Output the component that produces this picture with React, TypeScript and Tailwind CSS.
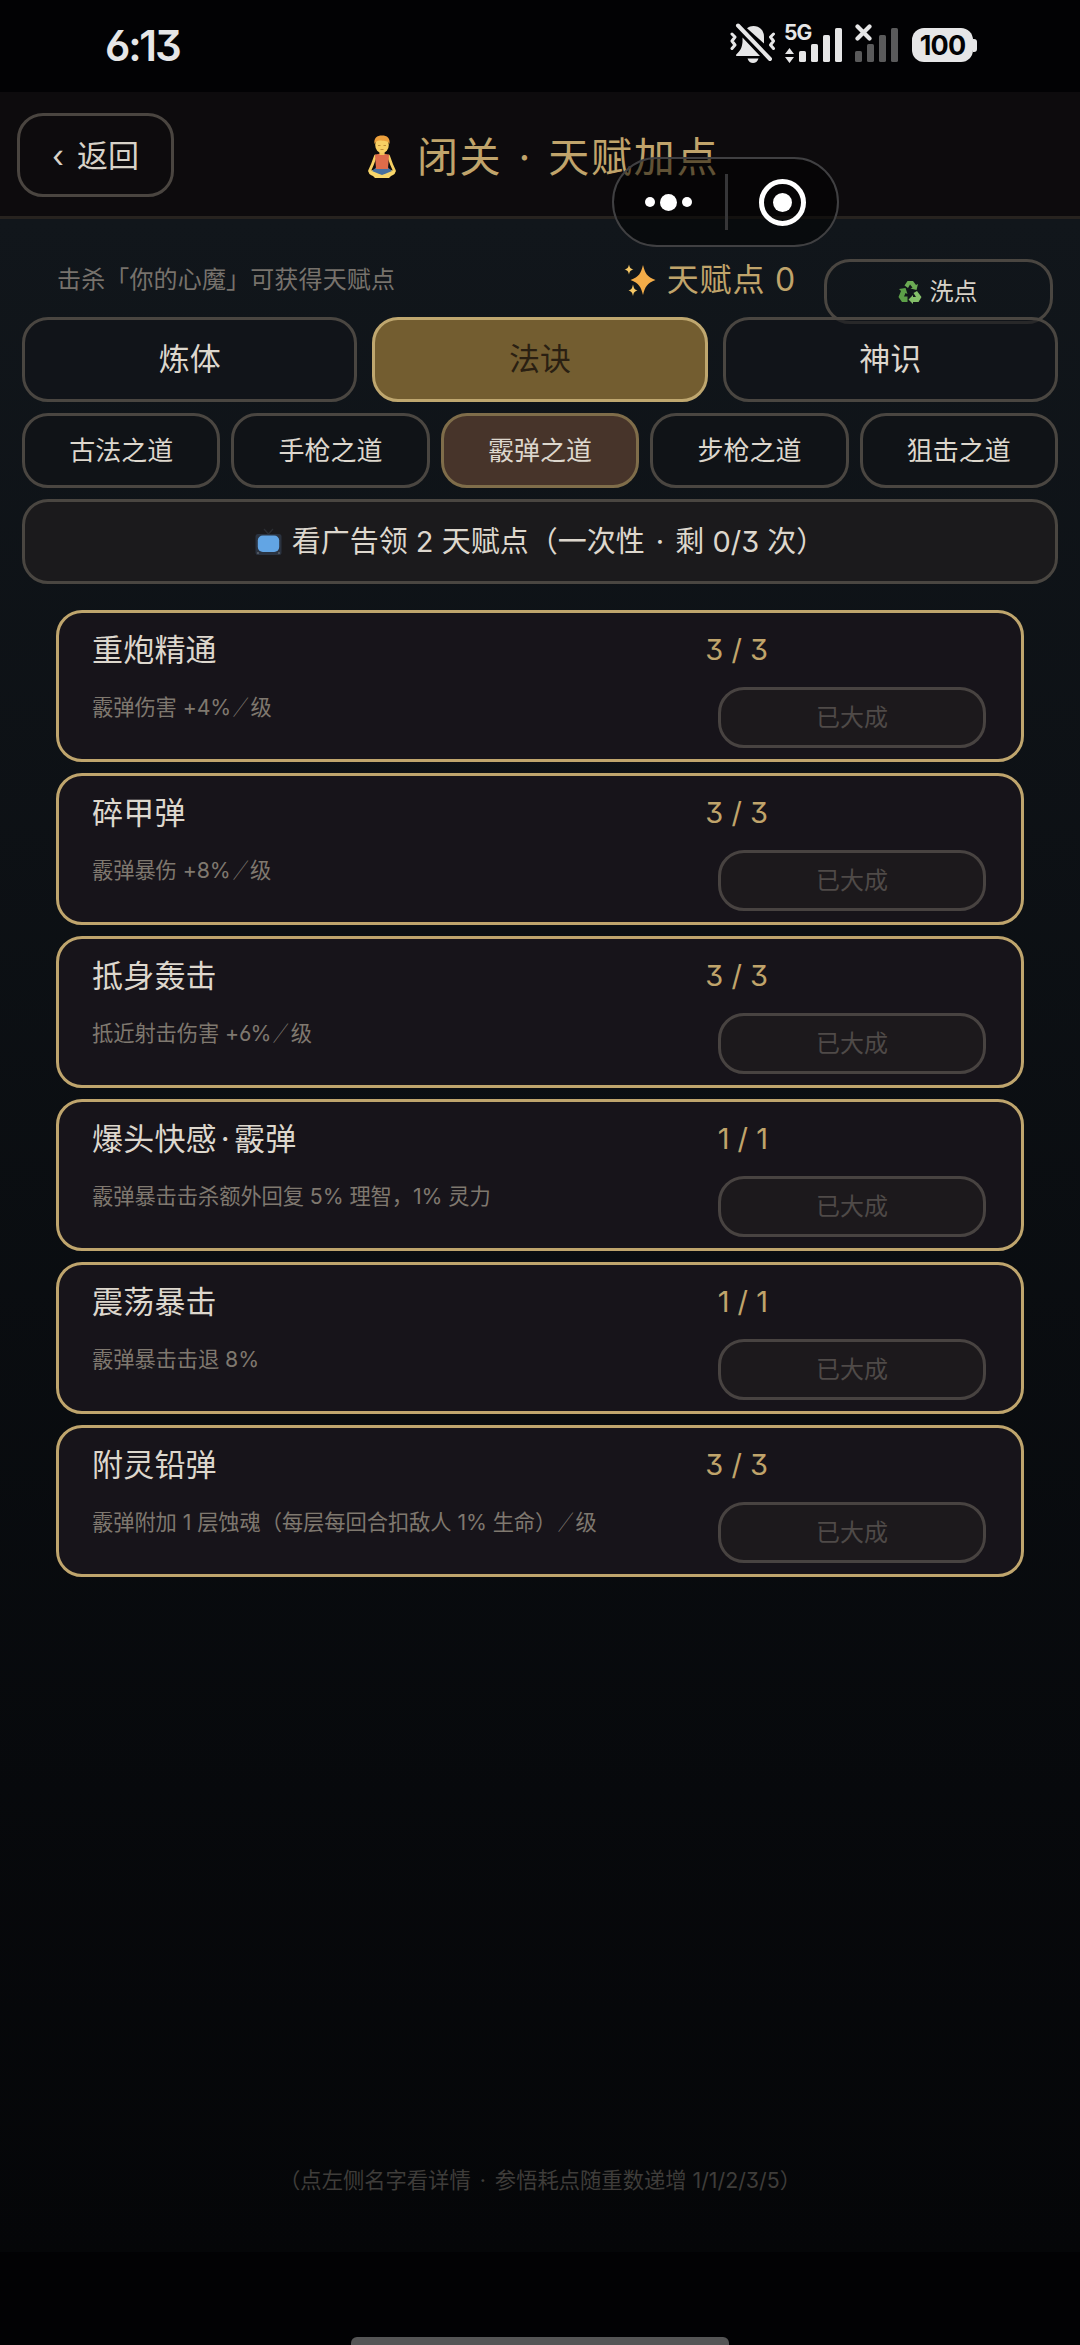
import { useState } from 'react';
import clsx from 'clsx';

interface Talent {
  name: string;
  desc: string;
  perLevel?: boolean;
  level: string;
}

const tabs = ['炼体', '法诀', '神识'];
const paths = ['古法之道', '手枪之道', '霰弹之道', '步枪之道', '狙击之道'];

const talents: Talent[] = [
  { name: '重炮精通', desc: '霰弹伤害 +4%', perLevel: true, level: '3 / 3' },
  { name: '碎甲弹', desc: '霰弹暴伤 +8%', perLevel: true, level: '3 / 3' },
  { name: '抵身轰击', desc: '抵近射击伤害 +6%', perLevel: true, level: '3 / 3' },
  { name: '爆头快感·霰弹', desc: '霰弹暴击击杀额外回复 5% 理智，1% 灵力', level: '1 / 1' },
  { name: '震荡暴击', desc: '霰弹暴击击退 8%', level: '1 / 1' },
  { name: '附灵铅弹', desc: '霰弹附加 1 层蚀魂（每层每回合扣敌人 1% 生命）', perLevel: true, level: '3 / 3' },
];

const barHeights = [
  { x: 0, y: 23, h: 11 },
  { x: 12, y: 16, h: 18 },
  { x: 24, y: 7, h: 27 },
  { x: 36, y: 0, h: 34 },
];

const SignalBars = ({ color }: { color: string }) => (
  <svg className="h-[34px] w-[43px]" viewBox="0 0 43 34" fill={color}>
    {barHeights.map((bar) => (
      <rect key={bar.x} x={bar.x} y={bar.y} width="7" height={bar.h} rx="1.6" />
    ))}
  </svg>
);

const MutedBell = () => (
  <svg className="h-[41px] w-[46px]" viewBox="0 0 46 41" fill="#e6e6e7">
    <path d="M17 5.2C19 3.8 21 3 23.500 3C29.500 3 34 7.500 34 13.500V20.500Z" />
    <path d="M12.500 14.500L30 33H7C6 33 5.700 32 6.500 31.200C10 28 12 25 12.500 19Z" />
    <path d="M17.500 35.500H28.500C27.500 38.500 25.500 40 23 40C20.500 40 18.500 38.500 17.500 35.500Z" />
    <path d="M8 2.500L40 36" stroke="#020204" strokeWidth="7" />
    <path d="M8 2.500L40 36" stroke="#e6e6e7" strokeWidth="4" strokeLinecap="round" />
    <path
      d="M2 11L5 14L2 18L5 22L2 25.500M43.500 11L40.500 14L43.500 18L40.500 22L43.500 25.500"
      fill="none"
      stroke="#e6e6e7"
      strokeWidth="3"
      strokeLinecap="round"
      strokeLinejoin="round"
    />
  </svg>
);

const StatusBar = () => (
  <div className="flex h-[92px] shrink-0 items-start bg-[#020204] text-[#e6e6e7]">
    <span className="ml-[105px] mt-[24px] text-[42px] leading-[44px] font-semibold tracking-[-2.200px]">6:13</span>
    <div className="ml-auto mr-[103px] mt-[23px] flex h-[41px] items-start">
      <MutedBell />
      <div className="relative ml-[23px] mt-[5px]">
        <SignalBars color="#e6e6e7" />
        <span className="absolute left-[-15px] top-[-5px] text-[21px] leading-[20px] font-bold tracking-[-0.8px]">5G</span>
        <svg className="absolute left-[-14px] top-[20px] h-[15px] w-[9px]" viewBox="0 0 9 15" fill="#e6e6e7">
          <path d="M4.500 0L9 6H0ZM4.500 15L9 9H0Z" />
        </svg>
      </div>
      <div className="relative ml-[13px] mt-[5px]">
        <SignalBars color="#5a5a5b" />
        <svg className="absolute left-0 top-[-4px] h-[17px] w-[17px]" viewBox="0 0 17 17">
          <path d="M2.500 2.500L14.500 14.500M14.500 2.500L2.500 14.500" stroke="#e6e6e7" strokeWidth="4.200" strokeLinecap="round" />
        </svg>
      </div>
      <div className="ml-[14px] mt-[5px] flex items-center">
        <div className="flex h-[34px] w-[61px] items-center justify-center rounded-[12px] bg-[#e6e6e7] text-[27px] leading-none font-bold tracking-[-0.8px] text-[#020204]">
          100
        </div>
        <div className="h-[13px] w-[4px] rounded-r-[3px] bg-[#e6e6e7]" />
      </div>
    </div>
  </div>
);

const MeditatingIcon = () => (
  <svg className="h-[44px] w-[30px] shrink-0" viewBox="0 0 30 44">
    <path
      d="M8.500 21C6.500 27 5 31 2.500 36M21.500 21C23.500 27 25 31 27.500 36"
      fill="none"
      stroke="#f5cf62"
      strokeWidth="2.800"
      strokeLinecap="round"
    />
    <path d="M2 36C6 35 9 34 11 34H19C21 34 24 35 28 36C29 38 27 40 24 41L22 43H8L6 41C3 40 1 38 2 36Z" fill="#f7d66b" />
    <path d="M9 32.500H21L25 36L19 38.500L15 40L11 38.500L5 36Z" fill="#466f9f" />
    <path d="M8 20C12 18 18 18 22 20L21 34H9Z" fill="#de6c4a" />
    <rect x="12.500" y="15" width="5" height="5" fill="#f2c558" />
    <ellipse cx="15" cy="10" rx="6.800" ry="8" fill="#f8cf63" />
    <path d="M7.500 9C6.500 3 10 .5 15 .5C20 .5 23.500 3 22.500 9C21 5.500 18 6.500 14 5.500C11 5 9 6 7.500 9Z" fill="#eda03c" />
    <path d="M11 10.500H13.500M16.500 10.500H19M13.500 14.500H16.500" stroke="#b98431" strokeWidth=".9" />
  </svg>
);

const SparkleIcon = () => (
  <svg className="h-[32px] w-[32px] shrink-0" viewBox="0 0 32 32">
    <path d="M19 1C21 9 23 13 31.500 16C23 19 21 23 19 31C17 23 15 19 6.500 16C15 13 17 9 19 1Z" fill="#f3ac48" />
    <path d="M5 .5C5.900 4 6.500 4.600 9.500 5.500C6.500 6.400 5.900 7 5 10.500C4.100 7 3.500 6.400.5 5.500C3.500 4.600 4.100 4 5 .5Z" fill="#f5c766" />
    <path d="M9 20.500C9.900 24.500 10.500 25.500 13.500 26.500C10.500 27.500 9.900 28 9 32C8.100 28 7.500 27.500 4.500 26.500C7.500 25.500 8.100 24.500 9 20.500Z" fill="#f5c766" />
  </svg>
);

const RecycleIcon = () => (
  <svg className="h-[24px] w-[24px] shrink-0" viewBox="0 0 24 24">
    <path d="M6.500 5.500L9.500 1H15L18 5L20 4L18.500 10L12.500 8.500L14.500 7.500L12 4.500L10 8Z" fill="#6cab54" />
    <path d="M19 11L23.500 17L20.500 22H15V24L10.500 19.500L15 15V17H18L15.500 13Z" fill="#84bf69" />
    <path d="M1 9L7.500 8L9.500 14L7.500 13L6 16.500H9.500V22H4L.5 17L3 11Z" fill="#5c9f48" />
  </svg>
);

const TvIcon = () => (
  <svg className="h-[28px] w-[27px] shrink-0" viewBox="0 0 27 28">
    <path d="M9 1L13.500 6L18 1" fill="none" stroke="#2c2e33" strokeWidth="1.200" />
    <rect x=".5" y="6" width="26" height="21" rx="2.500" fill="#2b3340" />
    <rect x="2.800" y="7.500" width="21.400" height="16.500" rx="5" fill="#62a5e4" />
    <circle cx="3" cy="25" r="1" fill="#5d6269" />
    <circle cx="24" cy="25" r="1" fill="#5d6269" />
  </svg>
);

const Header = () => (
  <header className="flex h-[127px] shrink-0 items-center border-b-[3px] border-[#27231f] bg-[#0d0b0d] px-[17px] pt-[2px]">
    <button className="flex h-[84px] w-[157px] items-center justify-center rounded-[26px] border-[3px] border-[#4a4540] text-[31px] leading-none text-[#d8d2c8]">
      <span className="mr-[13px]">‹</span>返回
    </button>
    <h1 className="flex flex-1 items-center justify-center pt-[4px] pl-[7px] text-[41px] leading-none text-[#c0a46b]">
      <MeditatingIcon />
      <span className="ml-[20px] whitespace-pre tracking-[1.700px]">
        闭关<span className="mx-[3px]"> · </span>天赋加点
      </span>
    </h1>
    <div className="w-[158px]" />
  </header>
);

const MiniProgramCapsule = () => (
  <div className="absolute left-[612px] top-[157px] flex h-[90px] w-[227px] items-center rounded-full border-[2px] border-[#404042] bg-black/50">
    <div className="flex w-[111px] items-center justify-center gap-[5px] pr-[3px]">
      <i className="h-[10px] w-[10px] rounded-full bg-white" />
      <i className="h-[17px] w-[17px] rounded-full bg-white" />
      <i className="h-[10px] w-[10px] rounded-full bg-white" />
    </div>
    <div className="h-[56px] w-[3px] bg-[#363638]" />
    <div className="flex flex-1 items-center justify-center">
      <div className="flex h-[47px] w-[47px] items-center justify-center rounded-full border-[5px] border-white">
        <i className="h-[19px] w-[19px] rounded-full bg-white" />
      </div>
    </div>
  </div>
);

const TalentCard = ({ name, desc, perLevel, level }: Talent) => {
  const [head, tail] = name.split('·');

  return (
    <li className="flex h-[152px] justify-between rounded-[26px] border-[3px] border-[#bfa56d] bg-[#17141a] pl-[33px] pr-[35px]">
      <div className="flex flex-col">
        <span className="mt-[19px] text-[31px] leading-[36px] tracking-[0.2px] text-[#ddd7cd]">
          {head}
          {tail && (
            <>
              <span className="mx-[4px]">·</span>
              {tail}
            </>
          )}
        </span>
        <span className="mt-[25px] whitespace-pre text-[21.300px] leading-[28px] text-[#7f786f]">
          <span className="tracking-[-0.1px]">{desc}</span>
          {perLevel && (
            <>
              <span className="ml-[-1px] mr-[-1px] inline-block scale-x-75">／</span>级
            </>
          )}
        </span>
      </div>
      <div className="flex w-[268px] flex-col">
        <div className="mt-[19px] flex w-[50px] justify-end">
          <span className="shrink-0 whitespace-nowrap text-[29px] leading-[36px] text-[#c0a46b]">{level}</span>
        </div>
        <button className="mt-[19px] flex h-[61px] items-center justify-center rounded-[26px] border-[3px] border-[#484341] bg-[#1c191c] text-[24px] leading-none text-[#4f4a48]">
          已大成
        </button>
      </div>
    </li>
  );
};

export default function App() {
  const [tab, setTab] = useState(1);
  const [path, setPath] = useState(2);

  return (
    <div className="relative flex h-[2345px] w-[1080px] flex-col overflow-hidden bg-[#020204] font-[Inter,'Noto_Sans_CJK_SC',sans-serif] [font-feature-settings:'cv03','cv04','cv09']">
      <StatusBar />
      <Header />
      <main className="flex h-[2033px] shrink-0 flex-col bg-linear-to-b from-[#11161b] to-[#050608] px-[22px]">
        <div className="mt-[40px] flex h-[58px] items-start pl-[35px] pr-[5px]">
          <span className="mt-[4px] text-[24px] leading-[34px] tracking-[0.150px] text-[#77726c]">击杀「你的心魔」可获得天赋点</span>
          <div className="ml-auto mt-[4px] flex h-[34px] items-center text-[32px] leading-[34px] text-[#c0a46b]">
            <SparkleIcon />
            <span className="ml-[11px] whitespace-pre tracking-[0.800px]">天赋点 0</span>
          </div>
          <button className="ml-[28px] flex h-[65px] w-[229px] items-center justify-center rounded-[26px] border-[3px] border-[#4a4641] pr-[2px] text-[24px] leading-none text-[#d8d2c8]">
            <RecycleIcon />
            <span className="ml-[8px]">洗点</span>
          </button>
        </div>

        <div className="flex gap-[15px]">
          {tabs.map((label, i) => (
            <button
              key={label}
              onClick={() => setTab(i)}
              className={clsx(
                'h-[85px] flex-1 rounded-[26px] border-[3px] pb-[3px] text-[31px] leading-none',
                i === tab ? 'border-[#bfa76f] bg-[#735d30] text-[#2a1f12]' : 'border-[#4a4641] bg-[#131419]/60 text-[#ddd7cd]',
              )}
            >
              {label}
            </button>
          ))}
        </div>

        <div className="mt-[11px] flex gap-[11px]">
          {paths.map((label, i) => (
            <button
              key={label}
              onClick={() => setPath(i)}
              className={clsx(
                'h-[75px] flex-1 rounded-[26px] border-[3px] text-[26px] leading-none text-[#ddd7cd]',
                i === path ? 'border-[#7f6d4a] bg-[#47342a]' : 'border-[#4a4641] bg-[#101317]',
              )}
            >
              {label}
            </button>
          ))}
        </div>

        <button className="mt-[11px] flex h-[85px] items-center justify-center rounded-[26px] border-[3px] border-[#4a4641] bg-[#1b1a1c] text-[29px] leading-none text-[#ddd7cd]">
          <TvIcon />
          <span className="ml-[10px] whitespace-pre">
            看广告领 2 天赋点（一次性<span className="mx-[3px]"> · </span>剩 0/3 次）
          </span>
        </button>

        <ul className="mt-[26px] flex flex-col gap-[11px] px-[34px]">
          {talents.map((talent) => (
            <TalentCard key={talent.name} {...talent} />
          ))}
        </ul>

        <p className="mb-[58px] mt-auto whitespace-pre text-center text-[21.300px] leading-[28px] text-[#3f3d3a]">
          （点左侧名字看详情<span className="mx-[3px]"> · </span>参悟耗点随重数递增 1/1/2/3/5）
        </p>
      </main>
      <div className="mx-auto mt-auto h-[8px] w-[378px] shrink-0 rounded-t-[6px] bg-[#555556]" />
      <MiniProgramCapsule />
    </div>
  );
}
